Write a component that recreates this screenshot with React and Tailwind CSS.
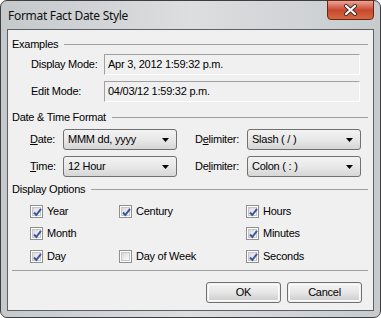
import React from 'react';

const FONT = { fontFamily: '"Liberation Sans", Arial, sans-serif' };

function Header({ children }) {
  return (
    <div className="flex items-center h-[14px] pl-[4px] pr-[5px]">
      <span className="whitespace-nowrap">{children}</span>
      <div className="flex-1 h-px bg-[#a0a0a0] ml-[6px]" />
    </div>
  );
}

function ReadBox({ label, value, className }) {
  return (
    <div className={'flex items-center pl-[23px] ' + className}>
      <span className="w-[73px]">{label}</span>
      <div className="w-[256px] h-[21px] flex items-center pl-[3px] border border-t-[#a0a0a0] border-l-[#a0a0a0] border-r-[#ffffff] border-b-[#ffffff] bg-[#f0f0f0]">
        {value}
      </div>
    </div>
  );
}

function Combo({ value }) {
  return (
    <div className="w-[114px] h-[21px] rounded-[3px] border border-[#707070] flex items-center pl-[4px] pr-[7px] bg-gradient-to-b from-[#f3f3f3] via-[#e8e8e8] to-[#d6d6d6]">
      <span className="flex-1">{value}</span>
      <svg width="7" height="4" viewBox="0 0 7 4">
        <path d="M0 0H7L3.5 4Z" fill="#000" />
      </svg>
    </div>
  );
}

function Check({ checked, label }) {
  return (
    <div className="flex items-center h-[16px]">
      <div className="w-[13px] h-[13px] border border-[#8e8f8f] bg-[#ffffff] p-px">
        <div className="w-full h-full border border-[#c6c6c6] bg-gradient-to-br from-[#d9d9d9] to-[#fbfbfb] relative">
          {checked && (
            <svg className="absolute -left-px -top-px" width="11" height="11" viewBox="0 0 11 11">
              <path d="M2 5.5L4.3 8L9 1.8" fill="none" stroke="#3c57a0" strokeWidth="2" />
            </svg>
          )}
        </div>
      </div>
      <span className="ml-[4px]">{label}</span>
    </div>
  );
}

function Button({ children }) {
  return (
    <div className="w-[75px] h-[21px] rounded-[3px] border border-[#707070] p-px">
      <div className="w-full h-full rounded-[2px] border border-[#fbfbfb] flex items-center justify-center bg-gradient-to-b from-[#f2f2f2] via-[#e6e6e6] to-[#cfcfcf]">
        {children}
      </div>
    </div>
  );
}

export default function App() {
  return (
    <div className="w-[381px] h-[318px] text-[11px] tracking-[-0.25px] text-black" style={FONT}>
      <div className="w-full h-full rounded-[7px] border border-[#3e3e3e] bg-gradient-to-r from-[#c6c9cc] via-[#dcdee0] to-[#c8cbce] flex flex-col">
        <div className="h-[28px] flex items-start relative shrink-0">
          <span
            className="pl-[7px] pt-[6px] text-[12px] tracking-[-0.3px] text-[#101010]"
            style={{ fontFamily: '"Noto Sans", "Open Sans", sans-serif' }}
          >
            Format Fact Date Style
          </span>
          <div className="absolute right-[6px] -top-px w-[47px] h-[20px] rounded-b-[4px] border border-[#6b2418] bg-gradient-to-b from-[#e9a597] via-[#c9472f] to-[#d4683e] flex items-center justify-center">
            <svg width="15" height="12" viewBox="0 0 15 12">
              <path d="M3 2L12 10M12 2L3 10" stroke="#3b2a2a" strokeWidth="4" strokeLinecap="round" />
              <path d="M3 2L12 10M12 2L3 10" stroke="#ffffff" strokeWidth="2.2" strokeLinecap="round" />
            </svg>
          </div>
        </div>
        <div className="mx-[6px] h-[282px] border border-[#5e6164] bg-[#f0f0f0] pt-[7px] flex flex-col">
          <Header>Examples</Header>
          <ReadBox className="mt-[3px]" label="Display Mode:" value="Apr 3, 2012 1:59:32 p.m." />
          <ReadBox className="mt-[6px]" label="Edit Mode:" value="04/03/12 1:59:32 p.m." />
          <div className="mt-[8px]">
            <Header>Date &amp; Time Format</Header>
          </div>
          <div className="mt-[5px] flex items-center pl-[22px]">
            <span className="w-[33px]"><u>D</u>ate:</span>
            <Combo value="MMM dd, yyyy" />
            <span className="w-[52px] ml-[18px]">D<u>e</u>limiter:</span>
            <Combo value="Slash ( / )" />
          </div>
          <div className="mt-[6px] flex items-center pl-[22px]">
            <span className="w-[33px]"><u>T</u>ime:</span>
            <Combo value="12 Hour" />
            <span className="w-[52px] ml-[18px]">De<u>l</u>imiter:</span>
            <Combo value="Colon ( : )" />
          </div>
          <div className="mt-[5px]">
            <Header>Display Options</Header>
          </div>
          <div className="mt-[7px] flex pl-[22px]">
            <div className="w-[89px]"><Check checked label="Year" /></div>
            <div className="w-[127px]"><Check checked label="Century" /></div>
            <Check checked label="Hours" />
          </div>
          <div className="mt-[6px] flex pl-[22px]">
            <div className="w-[216px]"><Check checked label="Month" /></div>
            <Check checked label="Minutes" />
          </div>
          <div className="mt-[7px] flex pl-[22px]">
            <div className="w-[89px]"><Check checked label="Day" /></div>
            <div className="w-[127px]"><Check label="Day of Week" /></div>
            <Check checked label="Seconds" />
          </div>
          <div className="mt-[6px] mx-[4px] mr-[5px] h-px bg-[#a0a0a0]" />
          <div className="mt-[11px] flex justify-end gap-[6px] pr-[11px]">
            <Button>OK</Button>
            <Button>Cancel</Button>
          </div>
        </div>
      </div>
    </div>
  );
}
